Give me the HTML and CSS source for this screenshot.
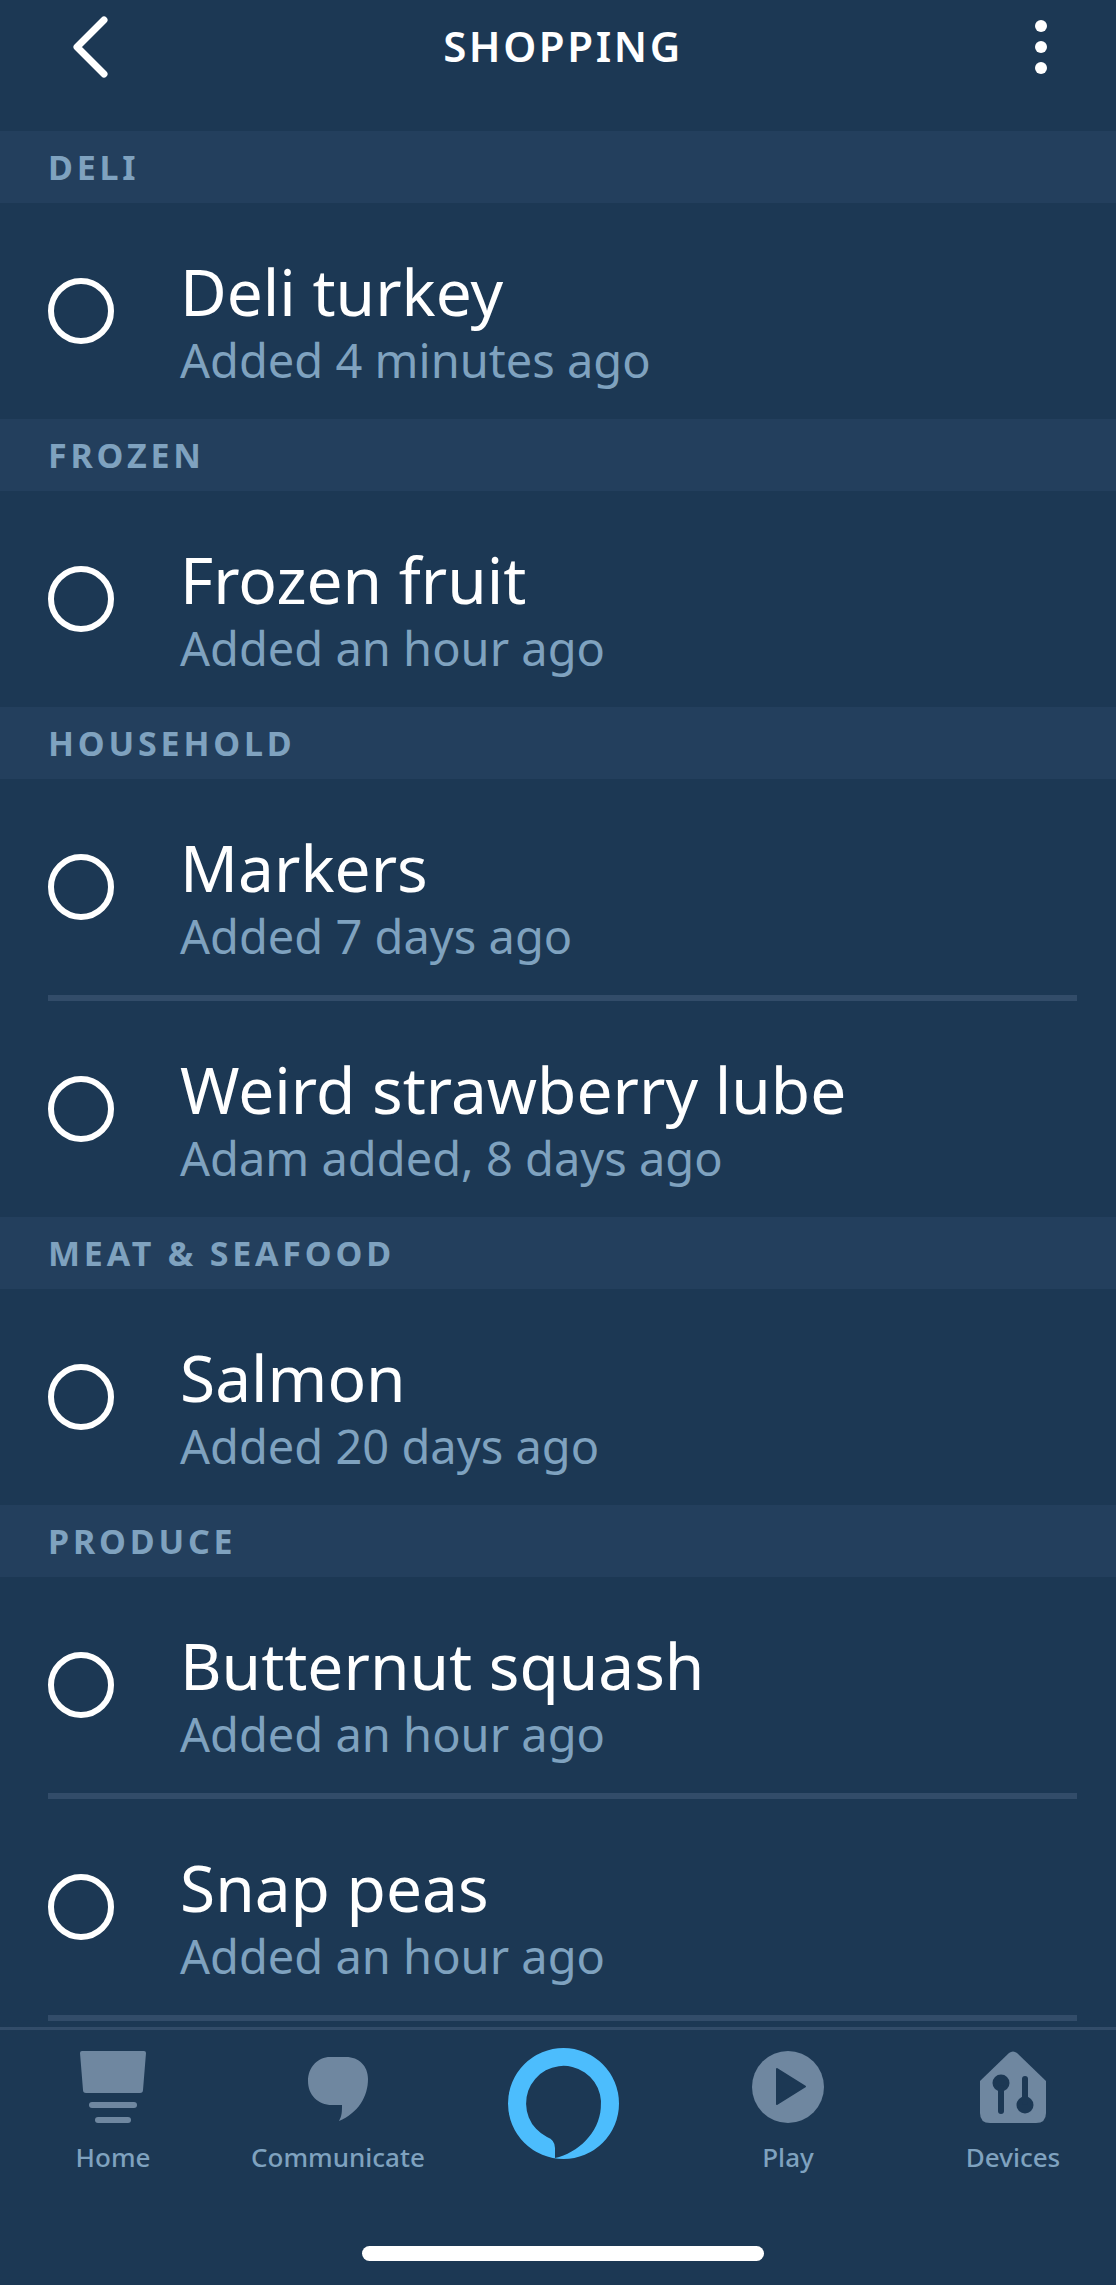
FILE: index.html
```html
<!DOCTYPE html>
<html lang="en">
<head>
  <meta charset="UTF-8" />
  <title>Shopping</title>
  <link rel="stylesheet" href="styles.css">
</head>
<body>
  <div class="page">
    <header class="topbar">
      <svg class="back" width="40" height="62" viewBox="0 0 40 62">
        <path d="M34 4 L7 31 L34 58" fill="none" stroke="#fff" stroke-width="7" stroke-linecap="round" stroke-linejoin="round"/>
      </svg>
      <h1>SHOPPING</h1>
      <div class="more"><span></span><span></span><span></span></div>
    </header>

    <main class="list">
      <h2 class="band">DELI</h2>
      <div class="item">
        <span class="check"></span>
        <div class="text"><p class="name">Deli turkey</p><p class="sub">Added 4 minutes ago</p></div>
      </div>

      <h2 class="band">FROZEN</h2>
      <div class="item">
        <span class="check"></span>
        <div class="text"><p class="name">Frozen fruit</p><p class="sub">Added an hour ago</p></div>
      </div>

      <h2 class="band">HOUSEHOLD</h2>
      <div class="item">
        <span class="check"></span>
        <div class="text"><p class="name">Markers</p><p class="sub">Added 7 days ago</p></div>
      </div>
      <hr class="line">
      <div class="item">
        <span class="check"></span>
        <div class="text"><p class="name">Weird strawberry lube</p><p class="sub">Adam added, 8 days ago</p></div>
      </div>

      <h2 class="band">MEAT &amp; SEAFOOD</h2>
      <div class="item">
        <span class="check"></span>
        <div class="text"><p class="name">Salmon</p><p class="sub">Added 20 days ago</p></div>
      </div>

      <h2 class="band">PRODUCE</h2>
      <div class="item">
        <span class="check"></span>
        <div class="text"><p class="name">Butternut squash</p><p class="sub">Added an hour ago</p></div>
      </div>
      <hr class="line">
      <div class="item">
        <span class="check"></span>
        <div class="text"><p class="name">Snap peas</p><p class="sub">Added an hour ago</p></div>
      </div>
      <hr class="line">
    </main>

    <nav class="tabs">
      <a class="tab">
        <svg width="66" height="72" viewBox="0 0 66 72" fill="#6f87a0">
          <path d="M2 0 H64 Q66 0 66 2 L63 39 Q63 42 60 42 H6 Q3 42 3 39 L0 2 Q0 0 2 0Z"/>
          <rect x="9" y="51" width="48" height="6" rx="3"/>
          <rect x="15" y="66" width="36" height="6" rx="3"/>
        </svg>
        <span>Home</span>
      </a>
      <a class="tab">
        <svg width="60" height="72" viewBox="0 -6 60 72" fill="#6f87a0">
          <path d="M22 0 H38 C51 0 60 9 60 22 C60 40 50 56 31 64 C34 59 34 54 34 48 H24 C10 48 0 38 0 24 C0 10 10 0 22 0Z"/>
        </svg>
        <span>Communicate</span>
      </a>
      <a class="tab tab-alexa">
        <svg width="111" height="111" viewBox="0 0 111 111">
          <path fill="#4cbdfd" fill-rule="evenodd" d="M55.5 0 A55.5 55.5 0 1 1 55.5 111 A55.5 55.5 0 0 1 55.5 0Z M47 110 V100 Q47 92 39 89 A37.5 37.5 0 1 1 92.8 60 C91 85 70 105 47 110Z"/>
        </svg>
      </a>
      <a class="tab">
        <svg width="72" height="72" viewBox="0 0 72 72">
          <circle cx="36" cy="36" r="36" fill="#6f87a0"/>
          <path d="M25 18 L53 35.5 L25 53Z" fill="#1c3854" stroke="#1c3854" stroke-width="2" stroke-linejoin="round"/>
        </svg>
        <span>Play</span>
      </a>
      <a class="tab">
        <svg width="66" height="72" viewBox="0 0 66 72">
          <path d="M29 2 Q33 -1 37 2 L66 30 V62 Q66 72 56 72 H10 Q0 72 0 62 V30Z" fill="#6f87a0"/>
          <circle cx="21" cy="32" r="8.5" fill="#1c3854"/>
          <rect x="18" y="34" width="6" height="29" rx="3" fill="#1c3854"/>
          <circle cx="45" cy="54" r="8.5" fill="#1c3854"/>
          <rect x="42" y="25" width="6" height="29" rx="3" fill="#1c3854"/>
        </svg>
        <span>Devices</span>
      </a>
    </nav>

    <div class="home-bar"></div>
  </div>
</body>
</html>
```

FILE: styles.css
```css
* {
  margin: 0;
  padding: 0;
  box-sizing: border-box;
}

body {
  font-family: "Noto Sans", sans-serif;
  background-color: #1c3854;
}

.page {
  width: 1116px;
  height: 2285px;
  overflow: hidden;
  display: flex;
  flex-direction: column;
}

.topbar {
  height: 131px;
  display: flex;
  justify-content: space-between;
  padding: 16px 69px 0 70px;
  align-items: flex-start;
  position: relative;
}

.topbar h1 {
  position: absolute;
  left: 10px;
  right: 0;
  top: 19px;
  text-align: center;
  color: #fff;
  font-size: 42px;
  font-weight: 600;
  letter-spacing: 2.6px;
  line-height: 54px;
}

.more {
  display: flex;
  flex-direction: column;
  gap: 9px;
  padding-top: 4px;
}

.more span {
  width: 12px;
  height: 12px;
  border-radius: 50%;
  background-color: #fff;
}

.band {
  height: 72px;
  background-color: #233f5d;
  color: #7fa2bf;
  font-size: 34px;
  font-weight: 700;
  letter-spacing: 3.8px;
  line-height: 72px;
  padding-left: 48px;
}

.item {
  height: 216px;
  display: flex;
  align-items: center;
  gap: 66px;
  padding-left: 48px;
}

.check {
  width: 66px;
  height: 66px;
  border: 6px solid #fff;
  border-radius: 50%;
  flex-shrink: 0;
}

.text {
  padding-top: 18px;
}

.name {
  color: #fff;
  font-size: 64px;
  line-height: 80px;
}

.sub {
  color: #7fa2bf;
  font-size: 47px;
  line-height: 57px;
}

.line {
  height: 6px;
  border: 0;
  margin: 0 39px 0 48px;
  background-color: #324c69;
}

.tabs {
  margin-top: 6px;
  border-top: 3px solid #324c69;
  padding: 21px 13px 0 23px;
  display: grid;
  grid-template-columns: repeat(5, 180px);
  column-gap: 45px;
}

.tab {
  display: flex;
  flex-direction: column;
  align-items: center;
  color: #7fa2bf;
  font-size: 26px;
  font-weight: 500;
}

.tab svg {
  display: block;
}

.tab span {
  margin-top: 16px;
  line-height: 36px;
}

.tab-alexa {
  margin-top: -3px;
}

.home-bar {
  width: 402px;
  height: 15px;
  border-radius: 8px;
  background-color: #fff;
  margin: 71px 0 0 362px;
}
```
